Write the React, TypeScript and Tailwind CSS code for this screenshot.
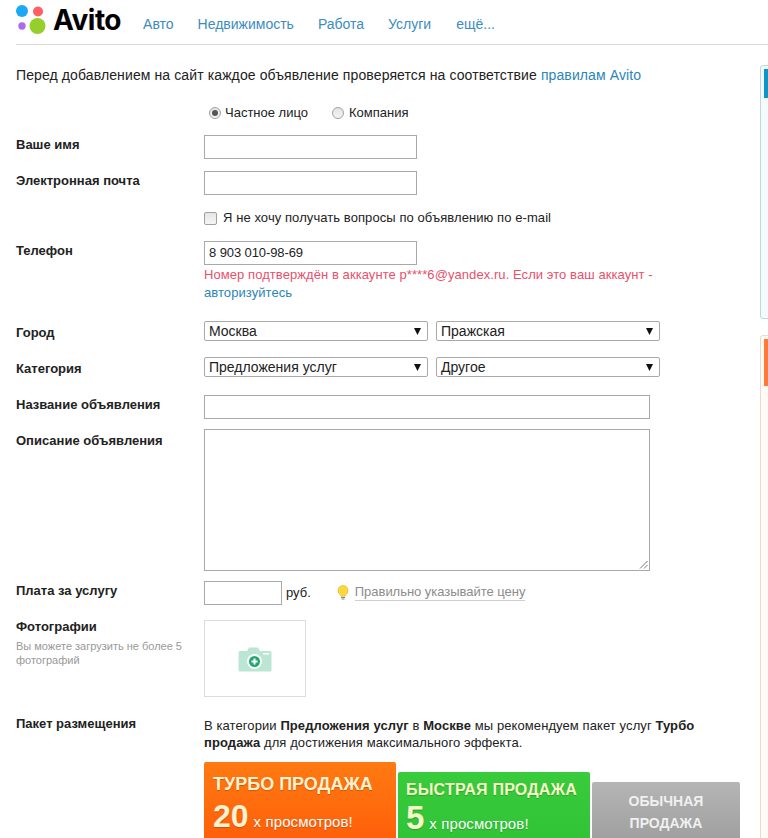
import React from "react";

function Row({ label, className, children }: { label?: React.ReactNode; className?: string; children?: React.ReactNode }) {
  return (
    <div className={"flex " + (className ?? "")}>
      <div className="w-[188px] shrink-0 text-[13px] font-bold leading-[18px] text-[#222]">{label}</div>
      <div className="flex-1 min-w-0">{children}</div>
    </div>
  );
}

function L({ children }: { children: React.ReactNode }) {
  return <span className="block pt-[1px]">{children}</span>;
}

function Select({ value }: { value: string }) {
  return (
    <div className="flex h-5 w-[224px] items-center justify-between rounded-[2px] border border-[#a9a9a9] pl-[4px] pr-[6px] text-[14px] leading-[18px] text-[#222]">
      <span>{value}</span>
      <svg width="7" height="7" viewBox="0 0 7 7"><path d="M0 0h7L3.500 7z" fill="#111" /></svg>
    </div>
  );
}

function Radio({ checked }: { checked?: boolean }) {
  return (
    <span className="flex h-[12px] w-[12px] items-center justify-center rounded-full border border-[#a0a0a0] bg-linear-to-b from-[#e4e4e4] to-[#f4f4f4]">
      {checked && <span className="h-[6px] w-[6px] rounded-full bg-[#555]" />}
    </span>
  );
}

function Logo() {
  return (
    <div className="flex items-center">
      <svg width="34" height="30" viewBox="0 0 34 30" className="shrink-0">
        <circle cx="6" cy="6" r="6" fill="#1aa9f5" />
        <circle cx="22" cy="6.5" r="5" fill="#ff6163" />
        <circle cx="6" cy="21" r="3.7" fill="#ab6ce8" />
        <circle cx="21.5" cy="21" r="8" fill="#96cf2c" />
      </svg>
      <span className="ml-[3px] font-['Inter',sans-serif] text-[28px] font-bold leading-[30px] tracking-[-0.5px] text-black">Avito</span>
    </div>
  );
}

export default function App() {
  return (
    <div className="relative h-[838px] w-[768px] overflow-hidden bg-white font-['Liberation_Sans',Arial,sans-serif] text-[#222]">
      <header className="ml-4 flex h-[45px] items-start border-b border-[#d9d9d9]">
        <div className="mt-[5px]"><Logo /></div>
        <nav className="ml-[22px] mt-[15px] flex gap-6 text-[14px] leading-[18px] text-[#3b8cc0]">
          <span>Авто</span>
          <span>Недвижимость</span>
          <span>Работа</span>
          <span>Услуги</span>
          <span className="ml-[1px]">ещё...</span>
        </nav>
      </header>

      <div className="flex">
        <main className="w-[760px] shrink-0 pl-4">
          <p className="mt-[21px] text-[14px] leading-[18px] tracking-[0.11px]">
            Перед добавлением на сайт каждое объявление проверяется на соответствие <span className="text-[#2a86b8]">правилам Avito</span>
          </p>

          <Row className="mt-[20px]">
            <div className="ml-[5px] flex items-center text-[13px] leading-[18px]">
              <Radio checked /><span className="ml-[4px]">Частное лицо</span>
              <span className="ml-[24px]"><Radio /></span><span className="ml-[5px]">Компания</span>
            </div>
          </Row>

          <Row label={<L>Ваше имя</L>} className="mt-[13px]">
            <div className="h-6 w-[213px] border border-[#a9a9a9]" />
          </Row>
          <Row label={<L>Электронная почта</L>} className="mt-3">
            <div className="h-6 w-[213px] border border-[#a9a9a9]" />
          </Row>
          <Row className="mt-[14px]">
            <div className="flex items-center text-[13px] leading-[18px] tracking-[0.08px]">
              <span className="h-[13px] w-[13px] rounded-[2px] border border-[#a0a0a0] bg-linear-to-b from-[#e6e6e6] to-[#f5f5f5]" />
              <span className="ml-[6px]">Я не хочу получать вопросы по объявлению по e-mail</span>
            </div>
          </Row>
          <Row label={<L>Телефон</L>} className="mt-[14px]">
            <div className="flex h-6 w-[213px] items-center border border-[#a9a9a9] pl-1 text-[13px] tracking-[-0.1px]">8 903 010-98-69</div>
            <p className="w-[460px] pt-[1px] text-[13px] leading-[18px] tracking-[0.07px] text-[#e8506c]">
              Номер подтверждён в аккаунте p****6@yandex.ru. Если это ваш аккаунт - <span className="text-[#2a86b8]">авторизуйтесь</span>
            </p>
          </Row>

          <Row label={<span className="block h-5 pt-[3px]">Город</span>} className="mt-[19px]">
            <div className="flex gap-2"><Select value="Москва" /><Select value="Пражская" /></div>
          </Row>
          <Row label={<span className="block h-5 pt-[3px]">Категория</span>} className="mt-4">
            <div className="flex gap-2"><Select value="Предложения услуг" /><Select value="Другое" /></div>
          </Row>
          <Row label={<L>Название объявления</L>} className="mt-[18px]">
            <div className="h-6 w-[446px] border border-[#a9a9a9]" />
          </Row>
          <Row label={<span className="block pt-[3px]">Описание объявления</span>} className="mt-[10px]">
            <div className="relative h-[142px] w-[446px] border border-[#a9a9a9]">
              <svg width="9" height="9" viewBox="0 0 9 9" className="absolute bottom-[1px] right-[1px]">
                <path d="M8.5 1 1 8.5M8.5 5 5 8.5" stroke="#777" strokeWidth="1" />
              </svg>
            </div>
          </Row>
          <Row label={<L>Плата за услугу</L>} className="mt-[10px]">
            <div className="flex items-center">
              <div className="h-6 w-[78px] border border-[#a9a9a9]" />
              <span className="ml-[4px] text-[13px]">руб.</span>
              <svg width="12" height="16" viewBox="0 0 12 16" className="ml-[26px]">
                <path d="M6 .5a5 5 0 0 0-3 9c.6.5.9 1 1 1.800h4c.1-.8.4-1.300 1-1.800a5 5 0 0 0-3-9z" fill="#fbd83c" stroke="#e0b020" strokeWidth=".6" />
                <path d="M4 12.500h4M4.500 14h3" stroke="#888" strokeWidth="1.200" />
              </svg>
              <span className="-mt-[2px] ml-[6px] border-b border-[#cfcfcf] text-[13px] leading-[17px] tracking-[-0.03px] text-[#8c8c8c]">Правильно указывайте цену</span>
            </div>
          </Row>
          <Row
            className="mt-[15px]"
            label={
              <div className="-mt-[2px]">
                Фотографии
                <div className="mt-[3px] w-[172px] text-[11px] font-normal leading-[14px] text-[#999]">Вы можете загрузить не более 5 фотографий</div>
              </div>
            }
          >
            <div className="flex h-[77px] w-[102px] items-center justify-center border border-[#dcdcdc]">
              <svg width="34" height="26" viewBox="0 0 34 26">
                <path d="M2 5h7l2-3.500h9L22 5h10a1.500 1.500 0 0 1 1.500 1.500V24a1.500 1.500 0 0 1-1.500 1.500H2A1.500 1.500 0 0 1 .5 24V6.500A1.500 1.500 0 0 1 2 5z" fill="#bce6d4" />
                <rect x="25" y="7" width="6" height="1.500" fill="#fff" />
                <circle cx="16.500" cy="15.500" r="7.500" fill="#fff" />
                <circle cx="16.500" cy="15.500" r="5.500" fill="#22a86f" />
                <path d="M16.500 12.500v6M13.500 15.500h6" stroke="#fff" strokeWidth="2" />
              </svg>
            </div>
          </Row>
          <Row label="Пакет размещения" className="mt-[18px]">
            <p className="w-[520px] pt-[2px] text-[13px] leading-[17px] tracking-[0.09px]">
              В категории <b>Предложения услуг</b> в <b>Москве</b> мы рекомендуем пакет услуг <b>Турбо продажа</b> для достижения максимального эффекта.
            </p>
          </Row>
          <div className="ml-[188px] mt-[11px] flex items-start gap-[2px]">
            <div className="h-[90px] w-[192px] rounded-t-[2px] bg-linear-to-b from-[#ff7a12] to-[#ff5a08] pl-[9px] pt-[11px] font-bold text-[#fdf3d0] [text-shadow:0_1px_1px_rgba(120,40,0,0.35)]">
              <div className="text-[18px] leading-[22px]">ТУРБО ПРОДАЖА</div>
              <div className="mt-[2px] flex items-baseline">
                <span className="text-[32px] leading-[38px]">20</span>
                <span className="ml-[5px] text-[15px] font-normal tracking-[0.1px] text-white">х просмотров!</span>
              </div>
            </div>
            <div className="mt-[10px] h-[80px] w-[192px] rounded-t-[2px] bg-linear-to-b from-[#38cc3c] to-[#2fc236] pl-[8px] pt-[8px] font-bold text-[#f6f6c8] [text-shadow:0_1px_1px_rgba(0,90,0,0.3)]">
              <div className="text-[16px] leading-[20px] tracking-[0.2px]">БЫСТРАЯ ПРОДАЖА</div>
              <div className="-mt-[1px] flex items-baseline">
                <span className="text-[33px] leading-[38px]">5</span>
                <span className="ml-[5px] text-[15px] font-normal tracking-[0.1px] text-white">х просмотров!</span>
              </div>
            </div>
            <div className="mt-[20px] h-[70px] w-[148px] rounded-t-[2px] bg-linear-to-b from-[#b5b5b5] to-[#9b9b9b] pt-[6px] text-center text-[14px] font-bold leading-[22px] text-[#f0f0f0]">
              <span className="block pt-[2px]">ОБЫЧНАЯ<br />ПРОДАЖА</span>
            </div>
          </div>
        </main>

        <aside className="w-[8px] shrink-0 pt-5">
          <div className="h-[254px] w-[40px] rounded-[3px] border border-[#b9dade] bg-[#f5fbfd] pl-[3px] pt-[3px]">
            <div className="h-[29px] bg-[#0e95c9]" />
          </div>
          <div className="mt-4 h-[600px] w-[40px] rounded-[3px] border border-[#ecd9c8] bg-[#fffaf5] pl-[3px] pt-[3px]">
            <div className="h-[47px] bg-[#ff7a3a]" />
          </div>
        </aside>
      </div>
    </div>
  );
}
